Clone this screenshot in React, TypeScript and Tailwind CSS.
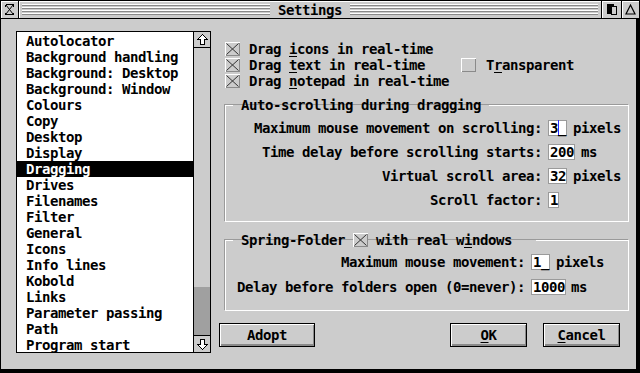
const topics = [
  "Autolocator",
  "Background handling",
  "Background: Desktop",
  "Background: Window",
  "Colours",
  "Copy",
  "Desktop",
  "Display",
  "Dragging",
  "Drives",
  "Filenames",
  "Filter",
  "General",
  "Icons",
  "Info lines",
  "Kobold",
  "Links",
  "Parameter passing",
  "Path",
  "Program start",
];

function CheckBox({ checked }: { checked?: boolean }) {
  return (
    <svg width="15" height="14" className="shrink-0">
      <rect x="0" y="0" width="15" height="14" fill="#cccccc" />
      <path d="M14.5 0.5V13.5H0.5" stroke="#8a8a8a" fill="none" shapeRendering="crispEdges" />
      <path d="M0.5 13.5V0.5H14.5" stroke="#ffffff" fill="none" shapeRendering="crispEdges" />
      {checked && <path d="M1.5 1.5L13.5 12.5M13.5 1.5L1.5 12.5" stroke="#333" strokeWidth="1" />}
    </svg>
  );
}

function Field({ children, w }: { children: React.ReactNode; w: string }) {
  return (
    <span className={`inline-block h-[16px] ${w} bg-white border border-[#9a9a9a] px-[1px] leading-[14px]`}>
      {children}
    </span>
  );
}

function U({ children }: { children: React.ReactNode }) {
  return <span className="underline decoration-1 underline-offset-[2px]">{children}</span>;
}

function Btn({ children, className }: { children: React.ReactNode; className: string }) {
  return (
    <div
      className={`h-[24px] border border-black bg-[#cccccc] flex items-center justify-center shadow-[inset_1px_1px_0_#ffffff,inset_-1px_-2px_0_#8a8a8a] ${className}`}
    >
      {children}
    </div>
  );
}

export default function App() {
  return (
    <div className="w-[640px] h-[373px] bg-black flex flex-col font-['DejaVu_Sans_Mono',monospace] font-bold text-[14px] tracking-[-0.43px] leading-[16px] text-black overflow-hidden">
      {/* Title bar */}
      <div className="h-[19px] flex gap-[1px] px-[1px] pt-[1px] pb-[1px] shrink-0">
        <div className="w-[17px] bg-[#cccccc] shadow-[inset_1px_1px_0_#ffffff] flex items-center justify-center">
          <svg width="17" height="17">
            <path d="M4.5 3.5H12.5M4.5 13.5H12.5M4.5 3.5V5.5M12.5 3.5V5.5M4.5 13.5V11.5M12.5 13.5V11.5" stroke="#000" fill="none" shapeRendering="crispEdges" />
            <path d="M5 4L12 13M12 4L5 13" stroke="#000" fill="none" />
          </svg>
        </div>
        <div className="flex-1 bg-[#cccccc] shadow-[inset_1px_1px_0_#ffffff] flex items-center px-[3px]">
          <div className="flex-1 flex flex-col">
            {[0, 1, 2, 3].map((i) => (
              <div key={i} className="mb-[1px]">
                <div className="h-[1px] bg-white" />
                <div className="h-[1px] bg-[#8a8a8a]" />
              </div>
            ))}
          </div>
          <div className="px-[8px] leading-[16px]">Settings</div>
          <div className="flex-1 flex flex-col">
            {[0, 1, 2, 3].map((i) => (
              <div key={i} className="mb-[1px]">
                <div className="h-[1px] bg-white" />
                <div className="h-[1px] bg-[#8a8a8a]" />
              </div>
            ))}
          </div>
        </div>
        <div className="w-[19px] bg-[#cccccc] shadow-[inset_1px_1px_0_#ffffff] flex items-center justify-center">
          <svg width="17" height="17" shapeRendering="crispEdges">
            <rect x="4" y="3" width="7" height="10" fill="#000" />
            <rect x="8.5" y="5.5" width="5" height="8" fill="#cccccc" stroke="#000" />
          </svg>
        </div>
        <div className="w-[17px] bg-[#cccccc] shadow-[inset_1px_1px_0_#ffffff] flex items-center justify-center">
          <svg width="17" height="17">
            <path d="M8.5 4L13 13H4Z" stroke="#000" fill="none" strokeWidth="1.2" />
          </svg>
        </div>
      </div>

      {/* Body */}
      <div className="flex-1 flex bg-[#cccccc] ml-[1px] mr-[4px] mb-[4px]">
        {/* Topic list */}
        <div className="pl-[15px] pt-[12px]">
          <div className="w-[195px] h-[322px] border border-black flex">
            <div className="w-[176px] bg-white pt-[1px]">
              {topics.map((t) => (
                <div
                  key={t}
                  className={`h-[16px] pl-[9px] whitespace-nowrap ${t === "Dragging" ? "bg-black text-white" : ""}`}
                >
                  {t}
                </div>
              ))}
            </div>
            <div className="w-[17px] border-l border-black flex flex-col">
              <div className="h-[16px] border-b border-black bg-[#cccccc] flex items-center justify-center">
                <svg width="13" height="13">
                  <path d="M6.5 1.5L11.5 6.5H8.5V11.5H4.5V6.5H1.5Z" stroke="#000" fill="#fff" shapeRendering="crispEdges" />
                </svg>
              </div>
              <div className="h-[239px] bg-[#cccccc]" />
              <div className="h-[48px] bg-[#a0a0a0]" />
              <div className="h-[17px] border-t border-black bg-[#cccccc] flex items-center justify-center">
                <svg width="13" height="13">
                  <path d="M6.5 11.5L11.5 6.5H8.5V1.5H4.5V6.5H1.5Z" stroke="#000" fill="#fff" shapeRendering="crispEdges" />
                </svg>
              </div>
            </div>
          </div>
        </div>

        {/* Right side */}
        <div className="flex-1 flex flex-col pt-[22px] pl-[14px]">
          <div className="flex flex-col">
            <div className="h-[16px] flex items-center">
              <CheckBox checked />
              <span className="ml-[9px]">
                Drag <U>i</U>cons in real-time
              </span>
            </div>
            <div className="h-[16px] flex items-center">
              <div className="w-[236px] flex items-center">
                <CheckBox checked />
                <span className="ml-[9px]">
                  Drag <U>t</U>ext in real-time
                </span>
              </div>
              <CheckBox />
              <span className="ml-[10px]">
                T<U>r</U>ansparent
              </span>
            </div>
            <div className="h-[16px] flex items-center">
              <CheckBox checked />
              <span className="ml-[9px]">
                Drag <U>n</U>otepad in real-time
              </span>
            </div>
          </div>

          <fieldset className="mt-[8px] w-[404px] border border-white shadow-[-1px_-1px_0_#9a9a9a] pt-[7px] pb-[13px]">
            <legend className="ml-[7px] px-[8px] h-[16px]">Auto-scrolling during dragging</legend>
            <div className="flex flex-col gap-[8px]">
              <div className="flex h-[16px]">
                <div className="w-[316px] text-right whitespace-nowrap">Maximum mouse movement on scrolling:</div>
                <div className="ml-[6px]">
                  <Field w="w-[19px]">
                    <span className="shadow-[1px_0_0_#2b2bff]">3</span>_
                  </Field>
                </div>
                <div className="ml-[6px]">pixels</div>
              </div>
              <div className="flex h-[16px]">
                <div className="w-[316px] text-right whitespace-nowrap">Time delay before scrolling starts:</div>
                <div className="ml-[6px]">
                  <Field w="w-[27px]">200</Field>
                </div>
                <div className="ml-[6px]">ms</div>
              </div>
              <div className="flex h-[16px]">
                <div className="w-[316px] text-right whitespace-nowrap">Virtual scroll area:</div>
                <div className="ml-[6px]">
                  <Field w="w-[19px]">32</Field>
                </div>
                <div className="ml-[6px]">pixels</div>
              </div>
              <div className="flex h-[16px]">
                <div className="w-[316px] text-right whitespace-nowrap">Scroll factor:</div>
                <div className="ml-[6px]">
                  <Field w="w-[11px]">1</Field>
                </div>
              </div>
            </div>
          </fieldset>

          <fieldset className="mt-[10px] w-[404px] border border-white shadow-[-1px_-1px_0_#9a9a9a] pt-[6px] pb-[15px]">
            <legend className="ml-[7px] pl-[8px] pr-[24px] h-[16px]">
              <span className="flex items-center h-[16px]">
                <span>Spring-Folder</span>
                <span className="ml-[8px]">
                  <CheckBox checked />
                </span>
                <span className="ml-[8px]">
                  with real w<U>i</U>ndows
                </span>
              </span>
            </legend>
            <div className="flex flex-col gap-[9px]">
              <div className="flex h-[16px]">
                <div className="w-[299px] text-right whitespace-nowrap">Maximum mouse movement:</div>
                <div className="ml-[6px]">
                  <Field w="w-[19px]">1_</Field>
                </div>
                <div className="ml-[6px]">pixels</div>
              </div>
              <div className="flex h-[16px]">
                <div className="w-[299px] text-right whitespace-nowrap">Delay before folders open (0=never):</div>
                <div className="ml-[6px]">
                  <Field w="w-[35px]">1000</Field>
                </div>
                <div className="ml-[5px]">ms</div>
              </div>
            </div>
          </fieldset>

          <div className="mt-[12px] flex">
            <Btn className="ml-[-6px] w-[96px]">Adopt</Btn>
            <Btn className="ml-[135px] w-[77px]">
              <U>O</U>K
            </Btn>
            <Btn className="ml-[16px] w-[77px]">
              <U>C</U>ancel
            </Btn>
          </div>
        </div>
      </div>
    </div>
  );
}
